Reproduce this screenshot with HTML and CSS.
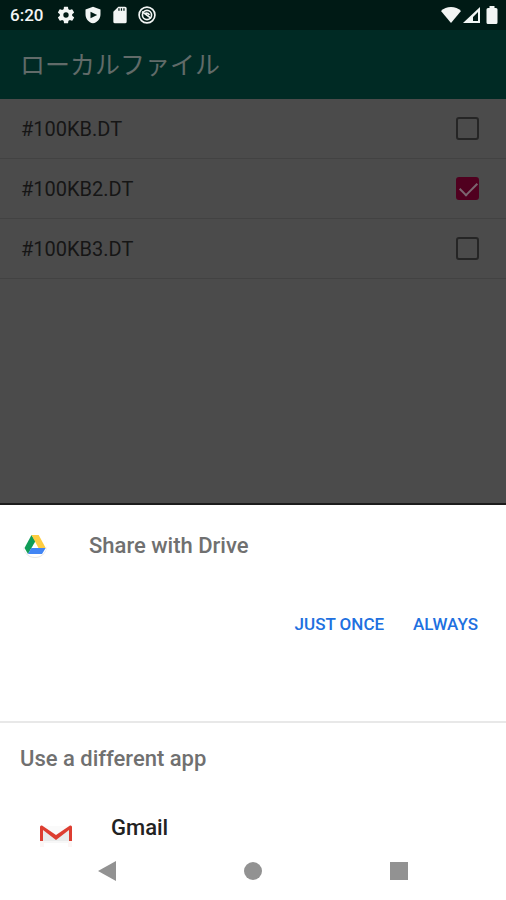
FILE: index.html
```html
<!DOCTYPE html>
<html lang="ja">
<head>
<meta charset="utf-8">
<meta name="viewport" content="width=device-width, initial-scale=1">
<title>ローカルファイル</title>
<link rel="stylesheet" href="styles.css">
</head>
<body>
<div class="status">
  <span class="clock">6:20</span>
  <div class="notices">
    <svg viewBox="0 0 24 24" width="20" height="20"><path fill-rule="evenodd" d="M19.4 13a7.500 7.500 0 0 0 0-2l2.100-1.600a.5.5 0 0 0 .1-.6l-2-3.500a.5.5 0 0 0-.6-.2l-2.500 1a7.300 7.300 0 0 0-1.700-1l-.4-2.600A.5.5 0 0 0 14 2h-4a.5.5 0 0 0-.5.4L9.200 5a7.300 7.300 0 0 0-1.700 1L5 5a.5.5 0 0 0-.6.200l-2 3.500a.5.5 0 0 0 .1.600L4.600 11a7.500 7.500 0 0 0 0 2l-2.100 1.600a.5.5 0 0 0-.1.600l2 3.500c.1.200.4.300.6.200l2.500-1c.5.400 1.100.7 1.700 1l.4 2.700c0 .2.200.4.400.4h4c.2 0 .4-.2.500-.4l.4-2.700c.6-.3 1.100-.6 1.700-1l2.500 1c.2.100.5 0 .6-.2l2-3.500a.5.500 0 0 0-.1-.6zM12 15.200a3.200 3.200 0 1 1 0-6.400 3.200 3.200 0 0 1 0 6.400z"/></svg>
    <svg viewBox="0 0 24 24" width="20" height="20"><path fill-rule="evenodd" d="M12 2 3 5.500V11c0 5.500 3.800 9.700 9 11 5.200-1.300 9-5.500 9-11V5.500zM9 8l8 4-8 4z"/></svg>
    <svg viewBox="0 0 24 24" width="20" height="20"><path fill-rule="evenodd" d="M10 2 4 8v12a2 2 0 0 0 2 2h12a2 2 0 0 0 2-2V4a2 2 0 0 0-2-2zM10 4h1.500v3H10zM13 4h1.500v3H13zM16 4h1.500v3H16z"/></svg>
    <svg viewBox="0 0 24 24" width="20" height="20"><g fill="none" stroke="#f2f5f4" stroke-width="2"><circle cx="12" cy="12" r="9.500"/><circle cx="12" cy="12" r="5.500"/><path d="m6 8 11 8M10 10q3-1 5 2"/></g></svg>
  </div>
  <div class="signals">
    <svg viewBox="0 0 20 18" width="20" height="18"><path d="M10 17 0 5C5-.5 15-.5 20 5z"/></svg>
    <svg viewBox="0 0 17 18" width="17" height="18"><path fill-rule="evenodd" d="M17 1v16H0zM15 6l-5 5v4h5z"/></svg>
    <svg viewBox="0 0 12 18" width="12" height="18"><path d="M3.500 2V0h5v2H10q1.500 0 1.500 1.500v13Q11.500 18 10 18H2Q.5 18 .5 16.500v-13Q.5 2 2 2z"/></svg>
  </div>
</div>
<header class="appbar"><h1>ローカルファイル</h1></header>
<main class="files">
  <label class="file"><span>#100KB.DT</span><input type="checkbox"></label>
  <label class="file"><span>#100KB2.DT</span><input type="checkbox" checked></label>
  <label class="file"><span>#100KB3.DT</span><input type="checkbox"></label>
</main>
<section class="sheet">
  <div class="target">
    <svg class="drive" viewBox="0 0 28 28" width="28" height="28"><circle cx="14" cy="15" r="12" fill="#e6e6e6"/><circle cx="14" cy="14" r="12" fill="#fff"/><path fill="#109d58" d="M10.500 4 3.500 17l3.500 6 7.500-13z"/><path fill="#ffcd40" d="M10.500 4h7.200l7 13h-7.200z"/><path fill="#4285f4" d="M10.300 17h14.400L21 23H7z"/></svg>
    <h2>Share with Drive</h2>
  </div>
  <div class="actions">
    <button type="button">JUST ONCE</button>
    <button type="button">ALWAYS</button>
  </div>
  <h3 class="other">Use a different app</h3>
  <a class="app" href="#gmail">
    <svg viewBox="0 0 34 26" width="34" height="26"><path fill="#fcf6f5" d="M1 17h4v6H1zM29 17h4v6h-4z"/><path fill="#f7f7f7" d="M5 17h24v2H5z"/><path fill="#e9ebeb" d="M2 2h30v15H2z"/><path fill="#fafafa" d="M2 2h30L17 12z"/><path fill="#dd3e31" d="M1 3q0-2 2-1.500L17 11 31 1.500q2-.5 2 1.500v14h-3V6L17 16 4 6v11H1z"/></svg>
    <span>Gmail</span>
  </a>
</section>
<nav class="nav">
  <button type="button" aria-label="Back"><svg viewBox="0 0 20 20" width="20" height="20"><path d="M1 10 19 0v20z"/></svg></button>
  <button type="button" aria-label="Home"><svg viewBox="0 0 20 20" width="20" height="20"><circle cx="10" cy="10" r="9"/></svg></button>
  <button type="button" aria-label="Overview"><svg viewBox="0 0 20 20" width="20" height="20"><path d="M1 1h18v18H1z"/></svg></button>
</nav>
</body>
</html>
```

FILE: styles.css
```css
* { box-sizing: border-box; }

body {
  margin: 0;
  min-height: 100vh;
  display: flex;
  flex-direction: column;
  background: #4b4b4b;
  font-family: Roboto, "Noto Sans CJK JP", sans-serif;
}

h1, h2, h3 { margin: 0; font-weight: 500; }

svg { display: block; }

button {
  padding: 0;
  border: 0;
  background: none;
  font: inherit;
}

.status {
  display: flex;
  align-items: center;
  height: 30px;
  padding: 0 8px 0 10px;
  background: #001a15;
  color: #f2f5f4;
  fill: #f2f5f4;
}

.clock { font-size: 17px; font-weight: 500; }

.notices { display: flex; gap: 7px; margin-left: 13px; }

.signals { display: flex; gap: 2px; margin-left: auto; }

.signals svg:last-child { margin-left: 4px; }

.appbar {
  display: flex;
  align-items: center;
  height: 69px;
  padding: 2px 20px 0;
  background: #002a24;
  color: #616b69;
}

.appbar h1 { font-size: 25px; font-weight: 400; line-height: 32px; }

.files { flex: 1; }

.file {
  display: flex;
  align-items: center;
  justify-content: space-between;
  height: 60px;
  padding: 0 27px 0 21px;
  border-bottom: 1px solid #424242;
  color: #161616;
  font-size: 20px;
}

.file input {
  appearance: none;
  width: 23px;
  height: 23px;
  margin: 0;
  border: 2px solid #252525;
  border-radius: 3px;
}

.file input:checked {
  border-color: #50001f;
  background: #50001f;
}

.file input:checked::before {
  content: "";
  display: block;
  width: 15px;
  height: 8px;
  margin: 3px 2px;
  border: solid #7b6670;
  border-width: 0 0 2px 2px;
  transform: rotate(-45deg);
}

.sheet {
  min-height: 397px;
  border-top: 2px solid #1c1c1c;
  background: #fff;
}

.target {
  display: flex;
  align-items: center;
  gap: 40px;
  height: 80px;
  padding-left: 21px;
}

.target h2 { color: #707070; font-size: 22px; }

.actions {
  display: flex;
  justify-content: flex-end;
  align-items: flex-start;
  gap: 29px;
  height: 138px;
  padding: 24px 28px 0 0;
  border-bottom: 2px solid #e8e8e8;
}

.actions button {
  height: 30px;
  color: #2070e0;
  font-size: 17px;
  font-weight: 500;
}

.other {
  padding: 20px 20px 0;
  color: #707070;
  font-size: 22px;
  line-height: 32px;
}

.app {
  display: flex;
  align-items: flex-start;
  gap: 38px;
  padding: 37px 20px 0 39px;
  color: #222;
  font-size: 22px;
  font-weight: 500;
  line-height: 32px;
  text-decoration: none;
}

.app svg { margin-top: 12px; }

.nav {
  position: fixed;
  right: 0;
  bottom: 0;
  left: 0;
  display: flex;
  justify-content: center;
  gap: 126px;
  height: 48px;
  padding-bottom: 10px;
  fill: #929292;
}
```
